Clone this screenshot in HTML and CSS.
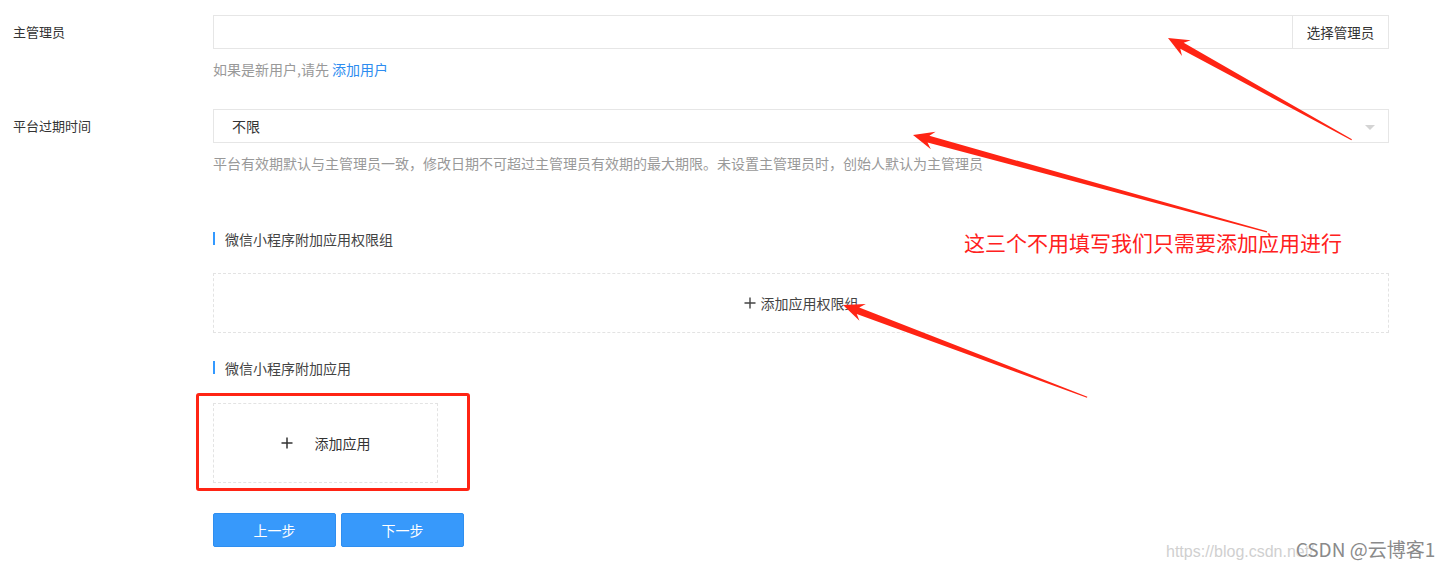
FILE: index.html
```html
<!DOCTYPE html>
<html lang="zh-CN">
<head>
    <meta charset="UTF-8">
    <title>平台设置</title>
    <link rel="stylesheet" href="styles.css">
</head>
<body>
    <div class="page">
        <div class="form">
            <div class="row">
                <div class="label">主管理员</div>
                <div class="field">
                    <div class="input-group">
                        <input class="input" type="text">
                        <span class="addon">选择管理员</span>
                    </div>
                    <div class="hint">如果是新用户,请先 <a class="link" href="#">添加用户</a></div>
                </div>
            </div>
            <div class="row row-second">
                <div class="label">平台过期时间</div>
                <div class="field">
                    <div class="select">
                        <span>不限</span>
                        <i class="caret"></i>
                    </div>
                    <div class="hint">平台有效期默认与主管理员一致，修改日期不可超过主管理员有效期的最大期限。未设置主管理员时，创始人默认为主管理员</div>
                </div>
            </div>

            <div class="section">
                <div class="section-title">微信小程序附加应用权限组</div>
                <div class="add-wide">
                    <svg class="plus" width="12" height="12" viewBox="0 0 12 12"><path d="M6 0.5V11.5M0.5 6H11.5" stroke="#444" stroke-width="1.4"/></svg>
                    添加应用权限组
                </div>
            </div>

            <div class="section section-apps">
                <div class="section-title">微信小程序附加应用</div>
                <div class="add-card">
                    <svg class="plus plus-big" width="12" height="12" viewBox="0 0 12 12"><path d="M6 0.5V11.5M0.5 6H11.5" stroke="#333" stroke-width="1.5"/></svg>
                    添加应用
                </div>
            </div>

            <div class="actions">
                <button class="btn">上一步</button>
                <button class="btn">下一步</button>
            </div>
        </div>

        <!-- screenshot annotations -->
        <div class="mark-box"></div>
        <div class="mark-text">这三个不用填写我们只需要添加应用进行</div>
        <svg class="arrows" width="1444" height="566" viewBox="0 0 1444 566">
            <g fill="#ff2414">
                <polygon transform="translate(1168 38) rotate(-151)" points="0,0 -21,-9 -16,-3.5 -210,-0.6 -210,0.6 -16,3.5 -21,9"/>
                <polygon transform="translate(913 135) rotate(-164.7)" points="0,0 -21,-9 -16,-3.5 -367,-0.6 -367,0.6 -16,3.5 -21,9"/>
                <polygon transform="translate(843 305) rotate(-159.3)" points="0,0 -21,-9 -16,-3.5 -261,-0.6 -261,0.6 -16,3.5 -21,9"/>
            </g>
        </svg>
        <div class="watermark">
            <span class="wm-url">https://blog.csdn.net/</span><span class="wm-name">CSDN @云博客1</span>
        </div>
    </div>
</body>
</html>
```

FILE: styles.css
```css
body {
    margin: 0;
    padding: 0;
    background: #fff;
    color: #333;
    font-family: "Noto Sans CJK SC", "Liberation Sans", sans-serif;
    font-size: 13px;
}
.page {
    position: relative;
    width: 1444px;
    height: 566px;
    overflow: hidden;
}
.form {
    padding-top: 15px;
}
.row {
    display: flex;
}
.row-second {
    margin-top: 30px;
}
.label {
    width: 200px;
    padding-left: 13px;
    line-height: 34px;
    font-size: 13px;
    color: #333;
}
.field {
    width: 1176px;
}
.input-group {
    display: flex;
    height: 34px;
    box-sizing: border-box;
    border: 1px solid #e6e6e6;
}
.input {
    flex: 1;
    border: none;
    outline: none;
    padding: 0 12px;
    font: inherit;
}
.addon {
    width: 95px;
    border-left: 1px solid #e6e6e6;
    text-align: center;
    line-height: 32px;
    font-size: 13.5px;
    color: #333;
}
.hint {
    margin-top: 10px;
    height: 20px;
    line-height: 20px;
    font-size: 14px;
    color: #999;
    white-space: nowrap;
}
.link {
    color: #2d8cf0;
    text-decoration: none;
}
.select {
    position: relative;
    height: 34px;
    box-sizing: border-box;
    border: 1px solid #e6e6e6;
    padding-left: 18px;
    line-height: 32px;
    font-size: 14px;
    color: #333;
}
.caret {
    position: absolute;
    right: 13px;
    top: 15px;
    width: 0;
    height: 0;
    border-left: 5px solid transparent;
    border-right: 5px solid transparent;
    border-top: 5px solid #d4d4d4;
}
.section {
    margin-left: 213px;
    width: 1176px;
    margin-top: 56px;
}
.section-apps {
    margin-top: 25px;
}
.section-title {
    position: relative;
    height: 20px;
    line-height: 20px;
    font-size: 14px;
    color: #444;
    padding-left: 12px;
}
.section-title::before {
    content: "";
    position: absolute;
    left: 0;
    top: 3px;
    width: 2px;
    height: 13px;
    background: #3399ff;
}
.add-wide {
    margin-top: 24px;
    height: 60px;
    border: 1px dashed #e3e3e3;
    box-sizing: border-box;
    display: flex;
    align-items: center;
    justify-content: center;
    font-size: 14px;
    color: #444;
}
.plus {
    margin-right: 5px;
}
.add-card {
    margin-top: 25px;
    width: 225px;
    height: 80px;
    box-sizing: border-box;
    border: 1px dashed #e3e3e3;
    display: flex;
    align-items: center;
    justify-content: center;
    font-size: 14px;
    color: #333;
}
.plus-big {
    margin-right: 22px;
}
.actions {
    margin: 30px 0 0 213px;
    display: flex;
    gap: 5px;
}
.btn {
    width: 123px;
    height: 34px;
    border: 1px solid #2f8eef;
    border-radius: 2px;
    background: #3799fb;
    color: #fff;
    font-family: inherit;
    font-size: 14px;
    cursor: pointer;
}
.mark-box {
    position: absolute;
    left: 196px;
    top: 393px;
    width: 268px;
    height: 92px;
    border: 3px solid #ff2414;
    border-radius: 3px;
}
.mark-text {
    position: absolute;
    left: 964px;
    top: 229px;
    font-size: 21px;
    line-height: 26px;
    color: #ff2020;
    white-space: nowrap;
}
.arrows {
    position: absolute;
    left: 0;
    top: 0;
}
.watermark {
    position: absolute;
    left: 1166px;
    top: 535px;
    white-space: nowrap;
}
.wm-url {
    font-family: "Liberation Sans", sans-serif;
    font-size: 16px;
    color: #d0d0d0;
}
.wm-name {
    margin-left: -18px;
    font-size: 19px;
    color: #8a8a8a;
    text-shadow: 0 0 2px #fff, 0 0 2px #fff;
}
```
